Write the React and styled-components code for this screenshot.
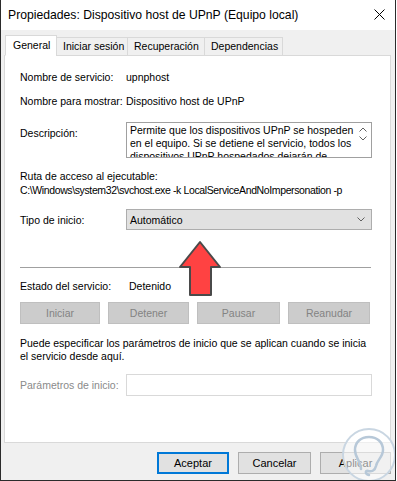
import React from 'react'
import styled, { createGlobalStyle } from 'styled-components'

const Global = createGlobalStyle`
  html, body { margin: 0; padding: 0; background: #ffffff; }
  body { font-family: "Liberation Sans", Arial, sans-serif; font-size: 10.5px; color: #000; }
`

const Window = styled.div`
  width: 394px;
  height: 480px;
  border-left: 1px solid #2b2b2b;
  border-right: 1px solid #2b2b2b;
  border-bottom: 1px solid #2b2b2b;
  background: #f0f0f0;
  display: flex;
  flex-direction: column;
  overflow: hidden;
`

const TitleBar = styled.div`
  height: 30px;
  background: #fff;
  display: flex;
  align-items: center;
  justify-content: space-between;
  padding: 0 7px 0 7px;
  font-size: 12.2px;
`

const Close = styled.svg`
  width: 11px;
  height: 11px;
  margin-right: 3px;
  margin-top: -2px;
`

const Body = styled.div`
  position: relative;
  flex: 1;
  padding: 6px 4px 0 3px;
  display: flex;
  flex-direction: column;
`

const Tabs = styled.div`
  display: flex;
  align-items: flex-end;
  height: 20px;
  position: relative;
  z-index: 1;
  margin-bottom: -1px;
`

const Tab = styled.div`
  box-sizing: border-box;
  height: ${p => (p.$active ? '21px' : '19px')};
  width: ${p => p.$w}px;
  margin-left: ${p => (p.$active ? '0' : '-1px')};
  padding: ${p => (p.$active ? '3px 0 0 7px' : '2px 0 0 6px')};
  background: ${p => (p.$active ? '#fff' : '#f0f0f0')};
  border: 1px solid #d9d9d9;
  border-bottom: ${p => (p.$active ? '1px solid #fff' : '1px solid #d9d9d9')};
  white-space: nowrap;
  &:first-child { margin-left: 1px; }
`

const Panel = styled.div`
  position: relative;
  box-sizing: border-box;
  width: 387px;
  height: 388px;
  background: #fff;
  border: 1px solid #d9d9d9;
  padding: 14px 0 0 15px;
  display: flex;
  flex-direction: column;
  overflow: hidden;
`

const Row = styled.div`
  display: grid;
  grid-template-columns: 106px 1fr;
  align-items: ${p => p.$top ? 'start' : 'center'};
  margin-top: ${p => p.$mt || 0}px;
  line-height: 14px;
  white-space: nowrap;
`

const Label = styled.span`
  color: ${p => (p.$muted ? '#8a8a8a' : '#000')};
  margin-top: ${p => p.$mt || 0}px;
`

const Value = styled.span`
  padding-left: ${p => p.$pl || 0}px;
`

const Line = styled.div`
  margin-top: ${p => p.$mt || 0}px;
  line-height: 14px;
  letter-spacing: ${p => p.$ls || 0}px;
  white-space: nowrap;
`

const Wrap = styled.div`
  margin-top: ${p => p.$mt || 0}px;
  line-height: 13px;
  width: 355px;
`

const TextArea = styled.div`
  box-sizing: border-box;
  width: 246px;
  height: 36px;
  border: 1px solid #a0a0a0;
  display: flex;
  overflow: hidden;
`

const AreaText = styled.div`
  flex: 1;
  padding: 1px 0 0 3px;
  line-height: 13px;
  white-space: normal;
`

const Scroll = styled.div`
  width: 17px;
  display: flex;
  flex-direction: column;
  align-items: center;
  padding-top: 4px;
  gap: 4px;
`

const Select = styled.div`
  box-sizing: border-box;
  width: 246px;
  height: 21px;
  background: #e1e1e1;
  border: 1px solid #adadad;
  display: flex;
  align-items: center;
  justify-content: space-between;
  padding: 0 6px 0 3px;
`

const Separator = styled.div`
  margin-top: ${p => p.$mt}px;
  width: 351px;
  height: 1px;
  background: #a0a0a0;
`

const ButtonRow = styled.div`
  display: flex;
  gap: ${p => p.$gap || 8}px;
  margin-top: ${p => p.$mt || 0}px;
`

const Button = styled.div`
  box-sizing: border-box;
  width: ${p => p.$w || 81}px;
  height: 22px;
  display: flex;
  align-items: center;
  justify-content: center;
  font-size: ${p => p.$fs || 10.5}px;
  background: ${p => (p.$disabled ? '#cccccc' : '#e1e1e1')};
  color: ${p => (p.$disabled ? '#838383' : '#000')};
  border: ${p => (p.$primary ? '2px solid #0078d7' : p.$disabled ? '1px solid #bfbfbf' : '1px solid #adadad')};
`

const Input = styled.div`
  box-sizing: border-box;
  width: 246px;
  height: 22px;
  border: 1px solid #d9d9d9;
  background: #fff;
`

const Footer = styled.div`
  display: flex;
  justify-content: flex-end;
  gap: 9px;
  padding: 9px 0 0 0;
`

const Overlay = styled.svg`
  position: absolute;
  pointer-events: none;
`

const Chevron = ({ up }) => (
  <svg width="8" height="5" viewBox="0 0 8 5">
    <path d={up ? 'M0.5 4.5 L4 1 L7.5 4.5' : 'M0.5 0.5 L4 4 L7.5 0.5'} fill="none" stroke="#606060" strokeWidth="1" />
  </svg>
)

const App = () => (
  <>
    <Global />
    <Window>
      <TitleBar>
        <span>Propiedades: Dispositivo host de UPnP (Equipo local)</span>
        <Close viewBox="0 0 11 11">
          <path d="M0.5 0.5 L10.5 10.5 M10.5 0.5 L0.5 10.5" stroke="#000" strokeWidth="1" />
        </Close>
      </TitleBar>
      <Body>
        <Tabs>
          <Tab $active $w={52}>General</Tab>
          <Tab $w={72}>Iniciar sesión</Tab>
          <Tab $w={78}>Recuperación</Tab>
          <Tab $w={79}>Dependencias</Tab>
        </Tabs>
        <Panel>
          <Row>
            <Label>Nombre de servicio:</Label>
            <Value>upnphost</Value>
          </Row>
          <Row $mt={10}>
            <Label>Nombre para mostrar:</Label>
            <Value>Dispositivo host de UPnP</Value>
          </Row>
          <Row $mt={14} $top>
            <Label $mt={4}>Descripción:</Label>
            <TextArea>
              <AreaText>
                Permite que los dispositivos UPnP se hospeden en el equipo. Si se detiene el servicio, todos los dispositivos UPnP hospedados dejarán de funcionar.
              </AreaText>
              <Scroll>
                <Chevron up />
                <Chevron />
              </Scroll>
            </TextArea>
          </Row>
          <Line $mt={11}>Ruta de acceso al ejecutable:</Line>
          <Line $ls={-0.38}>C:\Windows\system32\svchost.exe -k LocalServiceAndNoImpersonation -p</Line>
          <Row $mt={12}>
            <Label>Tipo de inicio:</Label>
            <Select>
              <span>Automático</span>
              <Chevron />
            </Select>
          </Row>
          <Separator $mt={37} />
          <Row $mt={11}>
            <Label>Estado del servicio:</Label>
            <Value $pl={3}>Detenido</Value>
          </Row>
          <ButtonRow $mt={9} $gap={8}>
            <Button $disabled $w={80}>Iniciar</Button>
            <Button $disabled $w={81}>Detener</Button>
            <Button $disabled $w={83}>Pausar</Button>
            <Button $disabled $w={82}>Reanudar</Button>
          </ButtonRow>
          <Wrap $mt={13}>
            Puede especificar los parámetros de inicio que se aplican cuando se inicia el servicio desde aquí.
          </Wrap>
          <Row $mt={11}>
            <Label $muted>Parámetros de inicio:</Label>
            <Input />
          </Row>
          <Overlay width="50" height="60" viewBox="0 0 50 60" style={{ left: 170, top: 184 }}>
            <path d="M25 2 L45 27 L36 27 L36 55 L15 55 L15 27 L5 27 Z" fill="#ff4242" stroke="#4a4a4a" strokeWidth="2" strokeLinejoin="round" />
          </Overlay>
        </Panel>
        <Footer>
          <Button $primary $w={72} $fs={11}>Aceptar</Button>
          <Button $w={73} $fs={11}>Cancelar</Button>
          <Button $w={71} $fs={11}>Aplicar</Button>
        </Footer>
        <Overlay width="60" height="60" viewBox="0 0 60 60" style={{ left: 338, top: 395 }}>
          <circle cx="30" cy="30" r="26" fill="#ffffff" fillOpacity="0.55" stroke="#c9d6e2" strokeWidth="2" />
          <path d="M22 44 C22 36 16 33 16 25 C16 17 22 12 30 12 C38 12 44 17 44 25 C44 32 38 35 37 41 C36 46 32 47 29 46 C26 45 26 49 30 50" fill="none" stroke="#b7c8d8" strokeWidth="2.5" strokeLinecap="round" />
        </Overlay>
      </Body>
    </Window>
  </>
)

export default App
